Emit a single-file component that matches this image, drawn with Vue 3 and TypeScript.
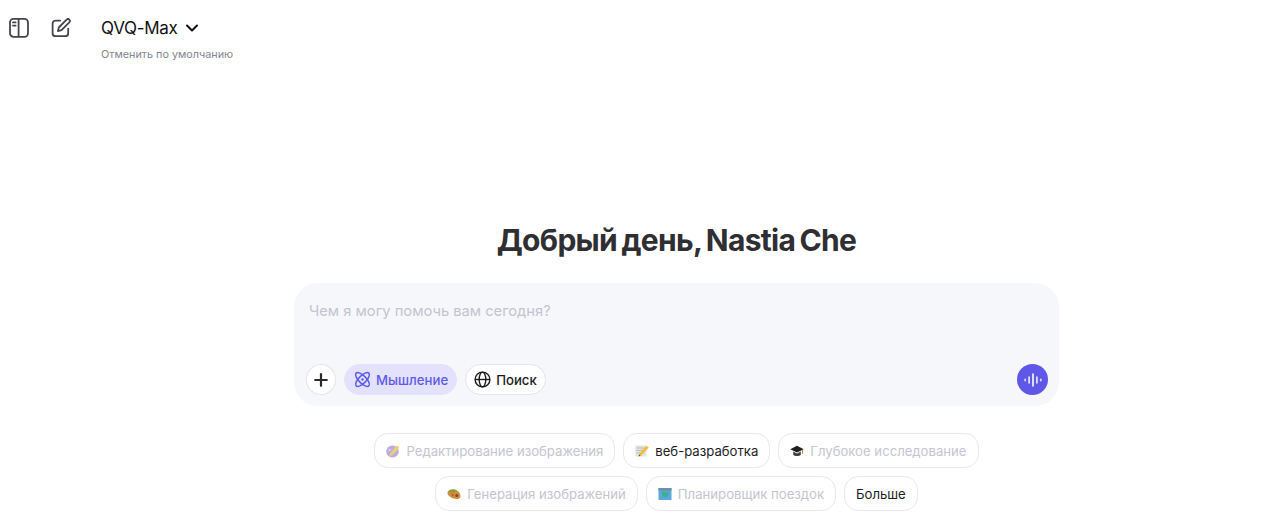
<template>
  <div class="page">
    <header class="topbar">
      <div class="top-icons">
        <button class="icon-btn" aria-label="sidebar">
          <svg width="22" height="22" viewBox="0 0 22 22" fill="none" stroke="#45454b" stroke-width="1.8">
            <rect x="2" y="1.8" width="18" height="18" rx="3.6" />
            <line x1="10.6" y1="1.8" x2="10.6" y2="19.8" />
            <line x1="5" y1="5.4" x2="7.6" y2="5.4" stroke-linecap="round" />
            <line x1="5" y1="8.6" x2="7.6" y2="8.6" stroke-linecap="round" />
          </svg>
        </button>
        <button class="icon-btn" aria-label="new chat">
          <svg width="20" height="20" viewBox="0 0 20 20" fill="none" stroke="#45454b" stroke-width="1.8" stroke-linecap="round" stroke-linejoin="round">
            <path d="M9.2 2.6H4.6a3 3 0 0 0-3 3v9.6a3 3 0 0 0 3 3h9.6a3 3 0 0 0 3-3v-4.6" />
            <path d="M15.6 1.6a1.9 1.9 0 0 1 2.7 2.7l-7.8 7.9-3.6.9.9-3.6z" />
          </svg>
        </button>
      </div>
      <div class="model">
        <div class="model-name">
          <span>QVQ-Max</span>
          <svg width="14" height="14" viewBox="0 0 14 14" fill="none" stroke="#111" stroke-width="2" stroke-linecap="round" stroke-linejoin="round">
            <polyline points="2,4.5 7,9.5 12,4.5" />
          </svg>
        </div>
        <p class="model-sub">Отменить по умолчанию</p>
      </div>
    </header>

    <main class="main">
      <h1 class="greeting">Добрый день, Nastia Che</h1>

      <div class="composer">
        <p class="placeholder">Чем я могу помочь вам сегодня?</p>
        <div class="composer-row">
          <div class="tools">
            <button class="round-btn" aria-label="add">
              <svg width="14" height="14" viewBox="0 0 14 14" stroke="#2a2a2e" stroke-width="2.2" stroke-linecap="round">
                <line x1="7" y1="1.2" x2="7" y2="12.8" />
                <line x1="1.2" y1="7" x2="12.8" y2="7" />
              </svg>
            </button>
            <button class="pill active">
              <svg width="17" height="17" viewBox="0 0 17 17" fill="none" stroke="#5f5be8" stroke-width="1.5">
                <ellipse cx="8.5" cy="8.5" rx="9" ry="3.7" transform="rotate(45 8.5 8.5)" />
                <ellipse cx="8.5" cy="8.5" rx="9" ry="3.7" transform="rotate(-45 8.5 8.5)" />
                <circle cx="8.5" cy="8.5" r="1.2" fill="#5f5be8" stroke="none" />
              </svg>
              <span>Мышление</span>
            </button>
            <button class="pill">
              <svg width="17" height="17" viewBox="0 0 17 17" fill="none" stroke="#1c1c1e" stroke-width="1.4">
                <circle cx="8.5" cy="8.5" r="7.4" />
                <ellipse cx="8.5" cy="8.5" rx="3.3" ry="7.4" />
                <line x1="1.1" y1="8.5" x2="15.9" y2="8.5" />
              </svg>
              <span>Поиск</span>
            </button>
          </div>
          <button class="voice-btn" aria-label="voice">
            <svg width="18" height="14" viewBox="0 0 18 14" stroke="#fff" stroke-linecap="round">
              <line x1="1.2" y1="6.2" x2="1.2" y2="7.8" stroke-width="1.6" opacity="0.8" />
              <line x1="5.1" y1="4" x2="5.1" y2="10" stroke-width="1.6" opacity="0.9" />
              <line x1="9" y1="1" x2="9" y2="13" stroke-width="1.6" />
              <line x1="12.9" y1="4" x2="12.9" y2="10" stroke-width="1.6" opacity="0.9" />
              <line x1="16.8" y1="6.2" x2="16.8" y2="7.8" stroke-width="1.6" opacity="0.8" />
            </svg>
          </button>
        </div>
      </div>

      <div class="chips">
        <div v-for="(row, i) in chipRows" :key="i" class="chip-row">
          <button v-for="chip in row" :key="chip.label" class="chip" :class="{ dark: chip.dark }">
            <svg v-if="chip.icon === 'palette'" class="emoji faded" viewBox="0 0 14 14">
              <ellipse cx="6.5" cy="7.5" rx="6.3" ry="6" fill="#a99bd8" />
              <circle cx="3.6" cy="6" r="1" fill="#e3d6f5" />
              <path d="M3.4 12l1-3 6.6-7.4 2.4 2L6.6 11z" fill="#f0c24a" />
            </svg>
            <svg v-else-if="chip.icon === 'memo'" class="emoji" viewBox="0 0 14 14">
              <rect x="0.3" y="1.5" width="11" height="11" fill="#e4e4de" />
              <path d="M1.5 4h8M1.5 6.5h6M1.5 9h4" stroke="#b0b8c4" stroke-width="0.9" />
              <path d="M3.5 12.5l1-3.2 7-7.6 2.3 1.9-7.2 7.6z" fill="#f2bd3a" />
              <path d="M3.5 12.5l.6-1.9 1.4 1.1z" fill="#5b4a2e" />
            </svg>
            <svg v-else-if="chip.icon === 'cap'" class="emoji" viewBox="0 0 14 14">
              <path d="M0.3 5.2L7 1.8l6.7 3.4L7 8.6z" fill="#1f1f22" />
              <path d="M3.2 7.4v3.4c1 1.6 6.6 1.6 7.6 0V7.4L7 9.4z" fill="#4a3f38" />
              <path d="M12.6 5.8v4.2" stroke="#b08a3c" stroke-width="1" />
            </svg>
            <svg v-else-if="chip.icon === 'art'" class="emoji" viewBox="0 0 14 14">
              <path d="M0.5 5.5C1.5 2 7 1.4 10 3.4c2.5 1.6 4 4.2 3.4 6.6-.5 2-4 2.6-6.6 1.6C4 10.6 0 8.4.5 5.5z" fill="#cf8f3c" />
              <path d="M1.6 4.6C3 2.4 7 1.8 9.4 3.4L6.4 6z" fill="#7fa23c" />
              <circle cx="9.8" cy="8.6" r="1.5" fill="#7a4a2a" />
              <circle cx="5.6" cy="8" r="1.2" fill="#d8583c" />
            </svg>
            <svg v-else-if="chip.icon === 'map'" class="emoji" viewBox="0 0 14 14">
              <rect x="0.5" y="1" width="13" height="12" fill="#5aa8dc" />
              <rect x="0.5" y="1" width="13" height="2.6" fill="#6f8fa8" />
              <path d="M3.5 5l2.5-.6 1.5 1.2L10.5 5v3.4l-2.4 2.4-1.6-1.4-2 .3z" fill="#3fae8e" />
            </svg>
            <span>{{ chip.label }}</span>
          </button>
        </div>
      </div>
    </main>
  </div>
</template>

<script setup lang="ts">
interface Chip {
  label: string;
  icon?: string;
  dark?: boolean;
}

const chipRows: Chip[][] = [
  [
    { label: 'Редактирование изображения', icon: 'palette' },
    { label: 'веб-разработка', icon: 'memo', dark: true },
    { label: 'Глубокое исследование', icon: 'cap' }
  ],
  [
    { label: 'Генерация изображений', icon: 'art' },
    { label: 'Планировщик поездок', icon: 'map' },
    { label: 'Больше', dark: true }
  ]
];
</script>

<style>
html,
body {
  margin: 0;
  background: #fff;
}
</style>

<style scoped>
.page {
  width: 1280px;
  height: 524px;
  overflow: hidden;
  background: #fff;
  font-family: Inter, "Noto Sans", sans-serif;
}

button {
  font-family: inherit;
  cursor: pointer;
}

.topbar {
  display: flex;
  align-items: flex-start;
  height: 147px;
  padding: 17px 0 0 8px;
  box-sizing: border-box;
}

.top-icons {
  display: flex;
  align-items: center;
  gap: 21px;
  width: 93px;
  height: 22px;
}

.icon-btn {
  display: flex;
  padding: 0;
  border: none;
  background: none;
}

.model-name {
  display: flex;
  align-items: center;
  gap: 8px;
  font-size: 17px;
  line-height: 22px;
  letter-spacing: -0.3px;
  color: #111;
}

.model-sub {
  margin: 9px 0 0;
  font-size: 10.8px;
  line-height: 14px;
  color: #85858f;
}

.main {
  width: 765px;
  margin-left: 294px;
}

.greeting {
  margin: 0;
  padding-top: 74px;
  font-size: 30px;
  line-height: 38px;
  font-weight: 700;
  letter-spacing: -0.7px;
  word-spacing: -2px;
  text-align: center;
  color: #2f2f33;
}

.composer {
  display: flex;
  flex-direction: column;
  justify-content: space-between;
  height: 123px;
  margin-top: 24px;
  padding: 18px 11px 11px 12px;
  box-sizing: border-box;
  background: #f6f7fb;
  border-radius: 24px;
}

.placeholder {
  margin: 0;
  padding-left: 3px;
  font-size: 14.7px;
  line-height: 20px;
  color: #c3c4cf;
}

.composer-row {
  display: flex;
  align-items: center;
  justify-content: space-between;
}

.tools {
  display: flex;
  align-items: center;
  gap: 8px;
}

.round-btn {
  display: flex;
  align-items: center;
  justify-content: center;
  width: 30px;
  height: 31px;
  padding: 0;
  background: #fff;
  border: 1px solid #e4e4ea;
  border-radius: 50%;
}

.pill {
  display: flex;
  align-items: center;
  gap: 5px;
  height: 31px;
  padding: 0 8px;
  background: #fff;
  border: 1px solid #e4e4ea;
  border-radius: 16px;
  font-size: 13.2px;
  font-weight: 500;
  color: #1c1c1e;
}

.pill.active {
  padding-left: 9px;
  background: #e3e1fc;
  border-color: #e3e1fc;
  color: #5f5be8;
}

.voice-btn {
  display: flex;
  align-items: center;
  justify-content: center;
  width: 31px;
  height: 31px;
  padding: 0;
  background: #5f57e8;
  border: none;
  border-radius: 50%;
}

.chips {
  display: flex;
  flex-direction: column;
  gap: 8px;
  margin-top: 27px;
}

.chip-row {
  display: flex;
  justify-content: center;
  gap: 8px;
}

.chip {
  display: flex;
  align-items: center;
  gap: 6px;
  height: 35px;
  padding: 0 11px;
  background: #fff;
  border: 1px solid #e8e8ee;
  border-radius: 14px;
  font-size: 13.15px;
  color: #c4c5d0;
}

.chip.dark {
  color: #1c1c1e;
}

.emoji {
  width: 14px;
  height: 14px;
  flex-shrink: 0;
}

.emoji.faded {
  opacity: 0.8;
}
</style>
